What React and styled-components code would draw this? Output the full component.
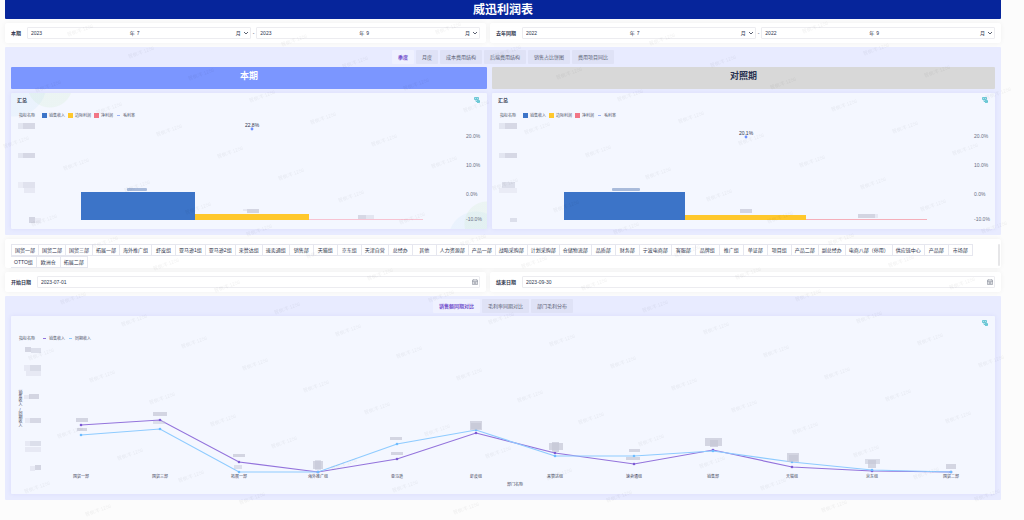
import { useEffect, useState } from "react";
import styled, { createGlobalStyle } from "styled-components";

const TAGS = [
  "国贸一部", "国贸二部", "国贸三部", "拓展一部", "海外推广组", "虾皮组", "亚马逊1组", "亚马逊2组",
  "来赞达组", "速卖通组", "销售部", "天猫组", "京东组", "天津自营", "总经办", "其他",
  "人力资源部", "产品一部", "战略采购部", "计划采购部", "仓储物流部", "品质部", "财务部", "宁波电商部",
  "客服部", "品牌组", "推广组", "单证部", "项目组", "产品二部", "副总经办", "电商八部（停用）",
  "供应链中心", "产品部", "市场部", "OTTO组", "欧洲仓", "拓展二部",
];

const SUMMARY_TABS = ["季度", "月度", "成本费用结构", "后端费用结构", "销售占比饼图", "费用项目同比"];
const TREND_TABS = ["销售额同期对比", "毛利率同期对比", "部门毛利分布"];

const BAR_LEGEND = [
  { name: "销售收入", color: "#3c74c8" },
  { name: "边际利润", color: "#ffc82c" },
  { name: "净利润", color: "#f27686" },
  { name: "毛利率", color: "#9db4f5", line: true },
];

const LINE_LEGEND = [
  { name: "销售收入", color: "#9373dc", line: true },
  { name: "同期收入", color: "#8ecbff", line: true },
];

const AXIS = [
  { label: "20.0%", y: 15 },
  { label: "10.0%", y: 44 },
  { label: "0.0%", y: 73 },
  { label: "-10.0%", y: 98 },
];

// masked figures: [x, y, width, height, opacity]
const CURRENT = {
  width: 476,
  barX: 70,
  barWidth: 114,
  tops: [71, 93, 98],
  profitColor: "#f7c3d2",
  rate: { x: 241, y: 8, label: "22.8%" },
  axisX: 455,
  masks: [
    [7, 2, 5, 6, 0.5], [12, 2, 12, 6, 0.9],
    [7, 32, 5, 5, 0.5], [12, 32, 12, 5, 0.9],
    [7, 61, 5, 6, 0.3], [12, 61, 12, 6, 0.6], [13, 67, 11, 5, 0.4],
    [18, 96, 6, 6, 1], [24, 97, 6, 5, 0.3],
    [236, 88, 12, 4, 1], [232, 88, 4, 2, 0.4],
    [347, 94, 8, 4, 0.9], [355, 94, 8, 4, 0.5],
  ],
  blurred: [116, 67, 20, 3],
};

const CONTRAST = {
  width: 503,
  barX: 72,
  barWidth: 121,
  tops: [71, 94, 98],
  profitColor: "#f5afba",
  rate: { x: 254, y: 16, label: "20.1%" },
  axisX: 482,
  masks: [
    [7, 2, 6, 6, 0.5], [13, 2, 12, 6, 0.9],
    [7, 32, 6, 5, 0.5], [13, 32, 12, 5, 0.9],
    [10, 61, 13, 6, 0.7], [7, 67, 18, 5, 0.3],
    [18, 97, 7, 4, 0.7],
    [248, 88, 12, 4, 1],
    [366, 93, 17, 4, 1], [383, 93, 3, 4, 0.4],
  ],
  blurred: [120, 67, 28, 3],
};

const DEPARTMENTS = [
  { name: "国贸一部", x: 70, now: 81, last: 91 },
  { name: "国贸三部", x: 149, now: 76, last: 85 },
  { name: "拓展一部", x: 228, now: 118, last: 128 },
  { name: "海外推广组", x: 307, now: 128, last: 128 },
  { name: "亚马逊", x: 386, now: 115, last: 100 },
  { name: "虾皮组", x: 465, now: 89, last: 86 },
  { name: "来赞达组", x: 544, now: 109, last: 112 },
  { name: "速卖通组", x: 623, now: 120, last: 112 },
  { name: "销售部", x: 702, now: 106, last: 107 },
  { name: "天猫组", x: 781, now: 123, last: 118 },
  { name: "京东组", x: 861, now: 127, last: 126 },
  { name: "国贸二部", x: 940, now: 128, last: 128 },
];

const TREND_MASKS = [
  [14, 3, 6, 5, 1], [20, 4, 10, 5, 0.7],
  [13, 21, 6, 6, 0.4], [19, 21, 11, 6, 0.8], [15, 27, 15, 5, 0.4],
  [13, 51, 6, 4, 0.4], [18, 50, 10, 5, 1],
  [14, 74, 5, 5, 0.4], [19, 74, 11, 5, 0.9],
  [14, 97, 5, 5, 0.4], [19, 97, 11, 5, 0.7], [14, 103, 16, 5, 0.4],
  [19, 122, 5, 5, 0.4], [24, 121, 6, 5, 1],
  [65, 74, 12, 4, 1], [66, 84, 10, 3, 1],
  [142, 68, 14, 4, 1], [142, 77, 12, 3, 0.7],
  [222, 110, 12, 3, 1], [223, 121, 8, 4, 0.7],
  [302, 117, 10, 8, 1], [304, 116, 6, 10, 0.7],
  [379, 93, 12, 3, 1], [380, 108, 12, 3, 1],
  [459, 77, 12, 9, 1], [460, 79, 10, 6, 1],
  [538, 99, 14, 7, 1], [541, 98, 7, 10, 1],
  [618, 105, 11, 3, 1], [615, 113, 14, 3, 1],
  [694, 94, 17, 8, 1], [699, 96, 8, 7, 1],
  [776, 109, 12, 9, 1], [778, 111, 9, 6, 1],
  [854, 115, 15, 5, 0.8], [857, 116, 8, 8, 1],
  [935, 120, 10, 5, 1],
];

const buildWatermarks = (width, height) => {
  const marks = [];
  for (let i = -30; i < 60; i++) {
    for (let j = -30; j < 40; j++) {
      const x = Math.round(80 + 60.7 * i - 32.1 * j);
      const y = Math.round(30 + 22.05 * i + 55.9 * j);
      if (x > 12 && x < width - 12 && y > 20 && y < height - 6) marks.push({ x, y });
    }
  }
  return marks;
};

const useWindowSize = () => {
  const [size, setSize] = useState([window.innerWidth, window.innerHeight]);
  useEffect(() => {
    const update = () => setSize([window.innerWidth, window.innerHeight]);
    window.addEventListener("resize", update);
    return () => window.removeEventListener("resize", update);
  }, []);
  return size;
};

const ChevronIcon = () => (
  <svg width="6" height="6" viewBox="0 0 6 6" fill="none" stroke="#5c6272">
    <path d="M1 2L3 4L5 2" />
  </svg>
);

const CalendarIcon = () => (
  <svg width="6" height="6" viewBox="0 0 12 12" fill="none" stroke="#6b7180">
    <path d="M1 2H11V11H1ZM1 5H11M3 7H9M3 9H9M3.5 0.5V3M8.5 0.5V3" />
  </svg>
);

const LinkIcon = () => (
  <svg width="6" height="6" viewBox="0 0 12 12" fill="none" stroke="#4dbccb" strokeWidth="1.6">
    <path d="M1 1H9V5H1ZM3 3H7M4 5V9H11M6 7H11V11H6" />
  </svg>
);

const MonthPicker = ({ id, name, year, month }) => (
  <Field>
    <FieldInput id={id} aria-label={`${name}年份`} defaultValue={year} />
    <Unit>年</Unit>
    <FieldInput aria-label={`${name}月份`} defaultValue={month} />
    <Unit>月</Unit>
    <IconButton type="button" aria-label={`选择${name}`}>
      <ChevronIcon />
    </IconButton>
  </Field>
);

const MonthRange = ({ id, label, year }) => (
  <>
    <FilterLabel htmlFor={id}>{label}</FilterLabel>
    <Range>
      <MonthPicker id={id} name={`${label}开始`} year={year} month="7" />
      <Dash>-</Dash>
      <MonthPicker id={`${id}-end`} name={`${label}结束`} year={year} month="9" />
    </Range>
  </>
);

const DateField = ({ id, label, value }) => (
  <>
    <FilterLabel htmlFor={id}>{label}</FilterLabel>
    <Field>
      <FieldInput id={id} defaultValue={value} />
      <IconButton type="button" aria-label={`选择${label}`}>
        <CalendarIcon />
      </IconButton>
    </Field>
  </>
);

const Tabs = ({ items }) => {
  const [active, setActive] = useState(items[0]);
  return (
    <TabBar>
      {items.map((item) => (
        <Tab key={item} type="button" $active={item === active} onClick={() => setActive(item)}>
          {item}
        </Tab>
      ))}
    </TabBar>
  );
};

const Legend = ({ items }) => (
  <LegendRow>
    <LegendTitle>指标名称</LegendTitle>
    {items.map(({ name, color, line }) => (
      <LegendItem key={name}>
        <Swatch $color={color} $line={line} />
        {name}
      </LegendItem>
    ))}
  </LegendRow>
);

const Masks = ({ items }) =>
  items.map(([x, y, width, height, opacity]) => (
    <rect key={`${x}-${y}`} x={x} y={y} width={width} height={height} fill="#c4c6d6" opacity={opacity * 0.7} />
  ));

const BarChart = ({ data }) => {
  const { width, barX, barWidth, tops, profitColor, rate, axisX, masks, blurred } = data;
  const [bx, by, bw, bh] = blurred;
  return (
    <Chart viewBox={`0 0 ${width} 108`} $height={108}>
      {tops.map((top, i) => (
        <rect
          key={top}
          x={barX + barWidth * i}
          y={top}
          width={barWidth}
          height={99 - top}
          fill={["#3c74c8", "#ffc82c", profitColor][i]}
        />
      ))}
      <rect x={bx} y={by} width={bw} height={bh} rx="1" fill="#a9bbdb" />
      <Masks items={masks} />
      <circle cx={rate.x} cy={rate.y} r="1.4" fill="#6f92ff" />
      <ChartNumber x={rate.x} y={rate.y - 2} textAnchor="middle" $dark>
        {rate.label}
      </ChartNumber>
      {AXIS.map(({ label, y }) => (
        <ChartNumber key={label} x={axisX} y={y + 2}>
          {label}
        </ChartNumber>
      ))}
    </Chart>
  );
};

const LineChart = () => {
  const points = (key) => DEPARTMENTS.map((d) => `${d.x},${d[key]}`).join(" ");
  return (
    <Chart viewBox="0 0 984 150" $height={150}>
      <polyline points={points("now")} fill="none" stroke="#9373dc" strokeWidth="1.2" />
      <polyline points={points("last")} fill="none" stroke="#8ecbff" strokeWidth="1.2" />
      {DEPARTMENTS.map(({ name, x, now, last }) => (
        <g key={name}>
          <circle cx={x} cy={now} r="1.3" fill="#7d5bd4" />
          <circle cx={x} cy={last} r="1.3" fill="#6fbcff" />
          <ChartLabel x={x} y="134" textAnchor="middle">
            {name}
          </ChartLabel>
        </g>
      ))}
      <Masks items={TREND_MASKS} />
      <ChartLabel x="504" y="142" textAnchor="middle">
        部门名称
      </ChartLabel>
      <AxisTitle x="9" y="65" textAnchor="middle">
        销售收入/同期收入
      </AxisTitle>
    </Chart>
  );
};

const SummaryCard = ({ data, decorated }) => (
  <Card $decorated={decorated}>
    <CardHeader>
      <CardTitle>汇总</CardTitle>
      <IconButton type="button" aria-label="联动">
        <LinkIcon />
      </IconButton>
    </CardHeader>
    <Legend items={BAR_LEGEND} />
    <BarChart data={data} />
  </Card>
);

const App = () => {
  const [width, height] = useWindowSize();
  return (
    <>
      <GlobalStyle />
      <Page>
        <Header>
          <Title>威迅利润表</Title>
        </Header>

        <FilterRow>
          <Filter>
            <MonthRange id="current" label="本期" year="2023" />
          </Filter>
          <Filter>
            <MonthRange id="previous" label="去年同期" year="2022" />
          </Filter>
        </FilterRow>

        <Panel>
          <Tabs items={SUMMARY_TABS} />
          <Compare>
            <Banner $primary>本期</Banner>
            <Banner>对照期</Banner>
            <SummaryCard data={CURRENT} decorated />
            <SummaryCard data={CONTRAST} />
          </Compare>
        </Panel>

        <TagPanel>
          <TagList>
            {TAGS.map((tag) => (
              <Tag key={tag} type="button">
                {tag}
              </Tag>
            ))}
          </TagList>
          <ScrollThumb />
        </TagPanel>

        <FilterRow>
          <Filter>
            <DateField id="start" label="开始日期" value="2023-07-01" />
          </Filter>
          <Filter>
            <DateField id="end" label="结束日期" value="2023-09-30" />
          </Filter>
        </FilterRow>

        <Panel>
          <Tabs items={TREND_TABS} />
          <Card>
            <CardHeader>
              <CardTitle />
              <IconButton type="button" aria-label="联动">
                <LinkIcon />
              </IconButton>
            </CardHeader>
            <Legend items={LINE_LEGEND} />
            <LineChart />
          </Card>
        </Panel>
      </Page>
      <Watermark aria-hidden="true">
        {buildWatermarks(width, height).map(({ x, y }) => (
          <text key={`${x}-${y}`} x={x} y={y + 2} textAnchor="middle" transform={`rotate(-20 ${x} ${y})`}>
            管枫洋 1256
          </text>
        ))}
      </Watermark>
    </>
  );
};

const GlobalStyle = createGlobalStyle`
  * {
    box-sizing: border-box;
  }
  body {
    margin: 0;
    background: #fcfcfc;
    color: #2e344c;
    font-family: "Liberation Sans", "Noto Sans CJK SC", sans-serif;
    font-size: 5px;
    line-height: 8px;
  }
  button,
  input {
    font: inherit;
    color: inherit;
    border: 0;
    padding: 0;
    background: none;
  }
`;
const Page = styled.main`
  padding: 0 23px 20px 5px;
  display: flex;
  flex-direction: column;
  gap: 4px;
`;
const Header = styled.header`
  height: 19px;
  border-radius: 0 0 1px 1px;
  background: #06259b;
  text-align: center;
`;
const Title = styled.h1`
  margin: 0;
  color: #fff;
  font-size: 12px;
  line-height: 20px;
`;
const FilterRow = styled.div`
  display: grid;
  grid-template-columns: 481fr 511fr;
  gap: 4px;
`;
const Filter = styled.div`
  height: 20px;
  padding: 0 6px;
  display: flex;
  align-items: center;
  gap: 6px;
  border-radius: 2px;
  background: #fff;
  box-shadow: 0 0 5px rgba(0, 0, 0, 0.05);
`;
const FilterLabel = styled.label`
  flex: none;
  font-weight: bold;
`;
const Range = styled.div`
  flex: 1;
  min-width: 0;
  display: flex;
  align-items: center;
  gap: 2px;
`;
const Dash = styled.span`
  flex: none;
`;
const Field = styled.div`
  flex: 1;
  min-width: 0;
  height: 12px;
  padding: 0 1px 0 3px;
  display: flex;
  align-items: center;
  gap: 2px;
  border: 1px solid #ececf0;
  border-radius: 1px;
  background: #fff;
`;
const FieldInput = styled.input`
  flex: 1;
  min-width: 0;
  width: 0;
  height: 8px;
`;
const Unit = styled.span`
  flex: none;
`;
const IconButton = styled.button`
  flex: none;
  width: 6px;
  height: 6px;
  display: flex;
  cursor: pointer;
`;
const Panel = styled.section`
  padding: 0 6px 6px;
  border-radius: 1px;
  background: #e8ebff;
`;
const TabBar = styled.div`
  height: 20px;
  padding: 3px 0;
  display: flex;
  justify-content: center;
  gap: 2px;
`;
const Tab = styled.button`
  padding: 0 6px;
  border-radius: 1px;
  background: ${({ $active }) => ($active ? "#eff1ff" : "#dfe2f6")};
  color: ${({ $active }) => ($active ? "#7450cc" : "#5a5f74")};
  font-weight: ${({ $active }) => ($active ? "bold" : "normal")};
  cursor: pointer;
`;
const Compare = styled.div`
  display: grid;
  grid-template-columns: 476fr 503fr;
  gap: 4px 5px;
`;
const Banner = styled.h2`
  height: 22px;
  margin: 0;
  border-radius: 1px;
  background: ${({ $primary }) => ($primary ? "#7b96ff" : "#d8d8d8")};
  color: ${({ $primary }) => ($primary ? "#fff" : "#2b3352")};
  font-size: 9px;
  line-height: 18px;
  text-align: center;
`;
const Card = styled.article`
  min-width: 0;
  border-radius: 1px;
  background: #f4f7ff;
  box-shadow: 0 0 4px rgba(120, 120, 220, 0.12);
  ${({ $decorated }) =>
    $decorated &&
    `background-image:
      radial-gradient(circle at 3px -9px, rgba(120, 190, 230, 0.08) 32px, transparent 33px),
      radial-gradient(circle at 39px -8px, rgba(160, 220, 140, 0.1) 22px, transparent 23px),
      radial-gradient(circle at 100% calc(100% - 5px), rgba(160, 220, 140, 0.1) 22px, transparent 23px),
      radial-gradient(circle at calc(100% - 11px) calc(100% + 10px), rgba(120, 190, 230, 0.08) 27px, transparent 28px);`}
`;
const CardHeader = styled.div`
  height: 13px;
  padding: 0 7px 0 6px;
  display: flex;
  align-items: center;
  justify-content: space-between;
`;
const CardTitle = styled.h3`
  margin: 0;
  font-size: 5px;
`;
const LegendRow = styled.div`
  height: 15px;
  padding: 4px 8px 0;
  display: flex;
  align-items: center;
  gap: 3px;
  color: #4c5166;
  font-size: 4px;
`;
const LegendTitle = styled.span`
  margin-right: 4px;
`;
const LegendItem = styled.span`
  display: flex;
  align-items: center;
  gap: 2px;
`;
const Swatch = styled.i`
  width: ${({ $line }) => ($line ? 3 : 5)}px;
  height: ${({ $line }) => ($line ? 1 : 5)}px;
  margin: 0 ${({ $line }) => ($line ? 1 : 0)}px;
  background: ${({ $color }) => $color};
`;
const Chart = styled.svg`
  display: block;
  width: 100%;
  height: ${({ $height }) => $height}px;
  overflow: visible;
`;
const ChartNumber = styled.text`
  fill: ${({ $dark }) => ($dark ? "#2e344c" : "#6a6f84")};
  font-size: 5px;
`;
const ChartLabel = styled.text`
  fill: #3f445a;
  font-size: 4px;
`;
const AxisTitle = styled(ChartLabel)`
  writing-mode: vertical-rl;
  text-orientation: upright;
`;
const TagPanel = styled.section`
  height: 29px;
  padding: 5px 1px 0 6px;
  display: flex;
  justify-content: space-between;
  border-radius: 2px;
  background: #fff;
  box-shadow: 0 0 5px rgba(0, 0, 0, 0.05);
  overflow: hidden;
`;
const TagList = styled.div`
  flex: 1;
  display: flex;
  flex-wrap: wrap;
  align-content: flex-start;
`;
const Tag = styled.button`
  height: 12px;
  min-width: 24px;
  padding: 0 3px;
  border: solid #e6e7ef;
  border-width: 1px 1px 1px 0;
  cursor: pointer;
  &:first-child {
    border-left-width: 1px;
  }
`;
const ScrollThumb = styled.div`
  flex: none;
  width: 2px;
  height: 22px;
  border-radius: 1px;
  background: #e6e6e8;
`;
const Watermark = styled.svg`
  position: fixed;
  inset: 0;
  width: 100%;
  height: 100%;
  pointer-events: none;
  fill: #000;
  opacity: 0.06;
  font-size: 5px;
`;

export default App;
